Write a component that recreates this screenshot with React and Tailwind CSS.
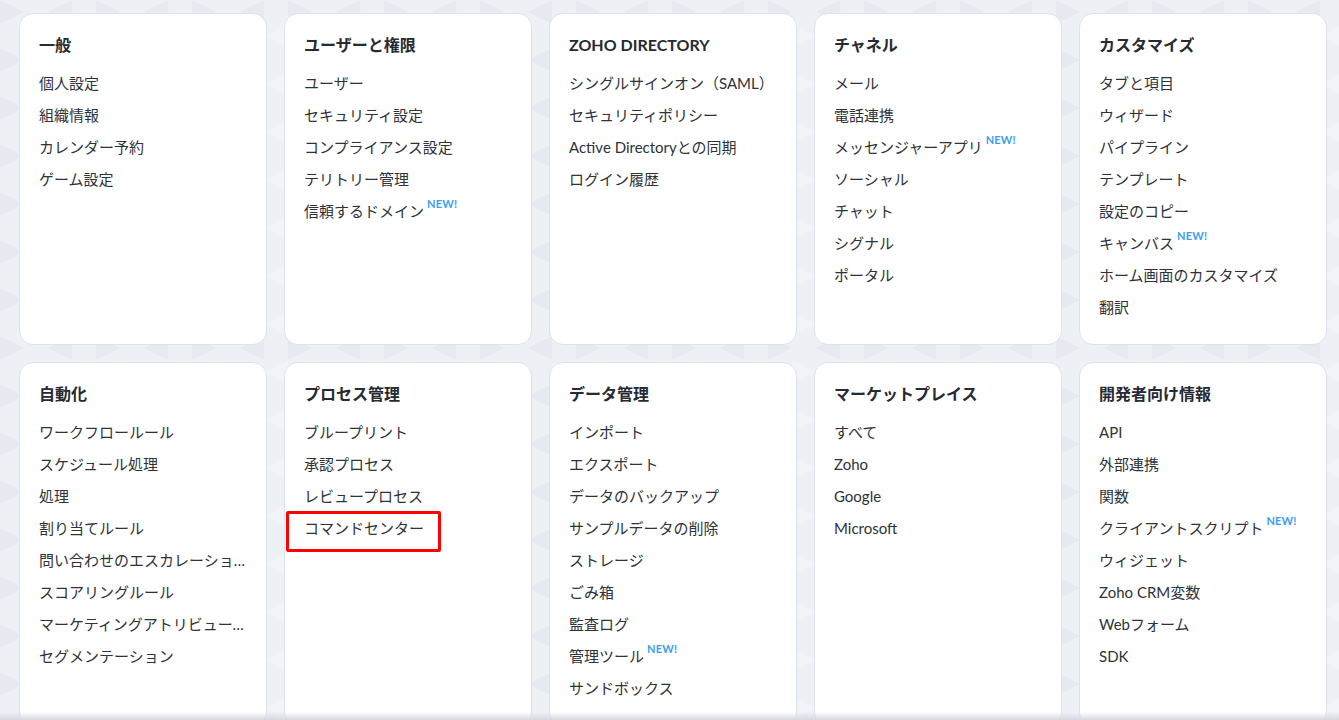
import React from "react";

const cards = [
  { title: "一般", items: ["個人設定", "組織情報", "カレンダー予約", "ゲーム設定"] },
  { title: "ユーザーと権限", items: ["ユーザー", "セキュリティ設定", "コンプライアンス設定", "テリトリー管理", { t: "信頼するドメイン", n: true }] },
  { title: "ZOHO DIRECTORY", items: ["シングルサインオン（SAML）", "セキュリティポリシー", "Active Directoryとの同期", "ログイン履歴"] },
  { title: "チャネル", items: ["メール", "電話連携", { t: "メッセンジャーアプリ", n: true }, "ソーシャル", "チャット", "シグナル", "ポータル"] },
  { title: "カスタマイズ", items: ["タブと項目", "ウィザード", "パイプライン", "テンプレート", "設定のコピー", { t: "キャンバス", n: true }, "ホーム画面のカスタマイズ", "翻訳"] },
  { title: "自動化", items: ["ワークフロールール", "スケジュール処理", "処理", "割り当てルール", "問い合わせのエスカレーション", "スコアリングルール", "マーケティングアトリビューション", "セグメンテーション"] },
  { title: "プロセス管理", items: ["ブループリント", "承認プロセス", "レビュープロセス", { t: "コマンドセンター", box: true }] },
  { title: "データ管理", items: ["インポート", "エクスポート", "データのバックアップ", "サンプルデータの削除", "ストレージ", "ごみ箱", "監査ログ", { t: "管理ツール", n: true }, "サンドボックス"] },
  { title: "マーケットプレイス", items: ["すべて", "Zoho", "Google", "Microsoft"] },
  { title: "開発者向け情報", items: ["API", "外部連携", "関数", { t: "クライアントスクリプト", n: true }, "ウィジェット", "Zoho CRM変数", "Webフォーム", "SDK"] },
];

function Item({ item }) {
  const it = typeof item === "string" ? { t: item } : item;
  return (
    <div className="relative h-[32px] leading-[32px] text-[15px] text-[#2e3239] whitespace-nowrap">
      {it.n ? (
        <span>
          {it.t}
          <span className="relative -top-[9px] ml-[3px] text-[11px] font-bold text-[#3b9ef0] tracking-[0.2px]">NEW!</span>
        </span>
      ) : (
        <div className="truncate">{it.t}</div>
      )}
      {it.box && (
        <div className="absolute left-[-18px] top-[-1px] w-[155px] h-[41px] border-[3px] border-[#ff0000] rounded-[2px]" />
      )}
    </div>
  );
}

function Card({ card }) {
  return (
    <div className="bg-white rounded-[14px] border border-[#dde2ec] px-[19px] pt-[21px] pb-[21px] min-w-0">
      <div className="h-5 leading-5 text-[16px] font-bold text-[#262a31]">{card.title}</div>
      <div className="mt-3">
        {card.items.map((it, i) => (
          <Item key={i} item={it} />
        ))}
      </div>
    </div>
  );
}

export default function App() {
  return (
    <div
      className="relative w-[1339px] h-[720px] overflow-hidden bg-[#edf0f5]"
      style={{ fontFamily: 'Lato, "Noto Sans CJK JP", "Noto Sans", sans-serif' }}
    >
      <svg className="absolute inset-0 w-full h-full" aria-hidden="true">
        <defs>
          <pattern id="tri" width="96" height="48" patternUnits="userSpaceOnUse">
            <polygon points="0,0 24,12 0,24" fill="#e6e9f0" />
            <polygon points="72,0 48,12 72,24" fill="#e6e9f0" />
            <polygon points="24,24 48,36 24,48" fill="#f1f3f7" />
            <polygon points="96,24 72,36 96,48" fill="#f1f3f7" />
          </pattern>
        </defs>
        <rect width="100%" height="100%" fill="url(#tri)" />
      </svg>
      <div className="relative grid grid-cols-5 gap-[17px] pl-[19px] pr-[12px] pt-[13px]">
        {cards.map((c, i) => (
          <Card key={i} card={c} />
        ))}
      </div>
      <div className="absolute left-0 right-0 bottom-0 h-[8px] bg-gradient-to-b from-[#ffffff00] to-[#d5d9df]" />
    </div>
  );
}
